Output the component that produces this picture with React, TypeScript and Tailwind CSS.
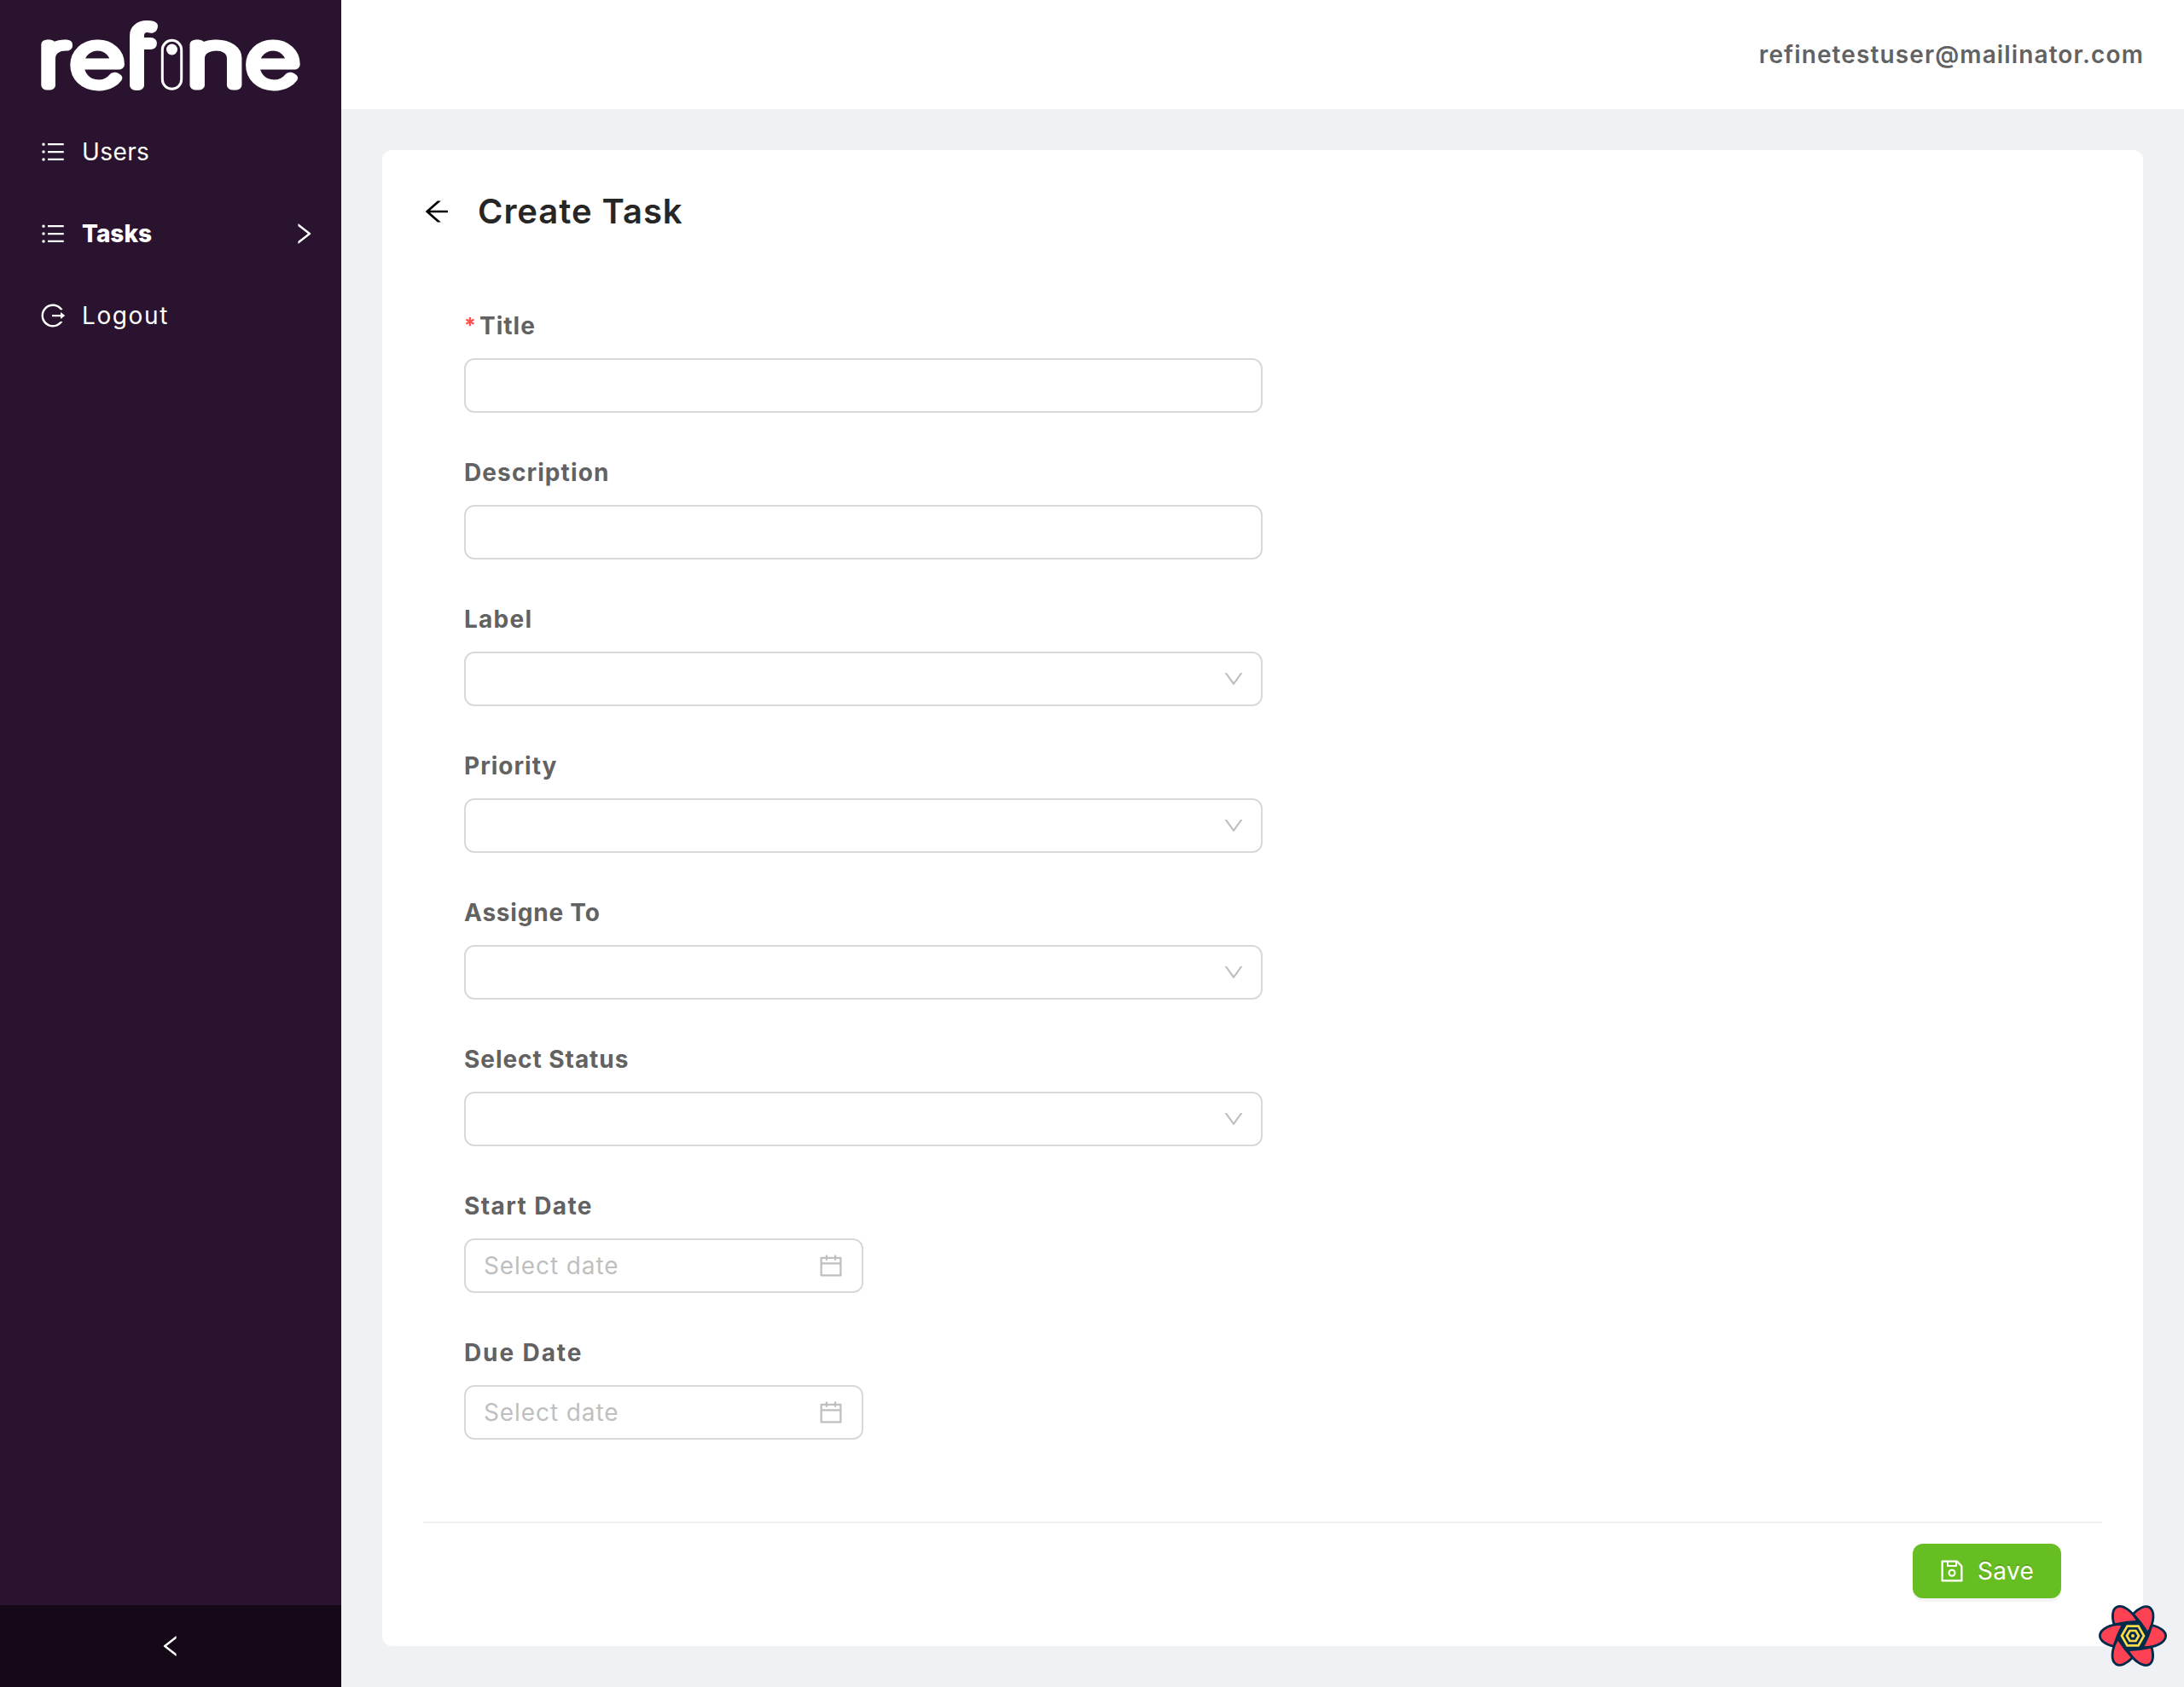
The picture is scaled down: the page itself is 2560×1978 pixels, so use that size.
import React from "react";
import type { ReactNode } from "react";
import {
  AiOutlineArrowLeft,
  AiOutlineCalendar,
  AiOutlineDown,
  AiOutlineLeft,
  AiOutlineLogout,
  AiOutlineRight,
  AiOutlineSave,
  AiOutlineUnorderedList,
} from "react-icons/ai";

type Kind = "input" | "select" | "date";

interface FieldDef {
  label: string;
  tracking: string;
  kind: Kind;
  required?: boolean;
}

const fields: FieldDef[] = [
  { label: "Title", tracking: "tracking-[1px]", kind: "input", required: true },
  { label: "Description", tracking: "tracking-[1.1px]", kind: "input" },
  { label: "Label", tracking: "tracking-[1.25px]", kind: "select" },
  { label: "Priority", tracking: "tracking-[1px]", kind: "select" },
  { label: "Assigne To", tracking: "tracking-[0.8px]", kind: "select" },
  { label: "Select Status", tracking: "tracking-[0.95px]", kind: "select" },
  { label: "Start Date", tracking: "tracking-[1.4px]", kind: "date" },
  { label: "Due Date", tracking: "tracking-[1.9px]", kind: "date" },
];

function Logo() {
  return (
    <svg
      className="block h-[140px] w-[400px] shrink-0 font-['Inter',sans-serif] text-[88px] font-thin"
      viewBox="0 0 400 140"
      fill="#fff"
      aria-label="refine"
    >
      <clipPath id="f-stem">
        <rect x="152" y="0" width="60" height="140" />
      </clipPath>
      <g stroke="#fff" strokeWidth="11" strokeLinejoin="round">
        <text transform="translate(44.5 100.3) scale(1.28 1)">r</text>
        <text transform="translate(82.3 100.3) scale(1.257 1)">e</text>
        <text transform="translate(218.5 100.3) scale(1.34 1)">n</text>
        <text transform="translate(288 100.3) scale(1.257 1)">e</text>
      </g>
      <g clipPath="url(#f-stem)">
        <text
          className="text-[92px]"
          transform="translate(147 100) scale(1.2 1)"
          stroke="#fff"
          strokeWidth="12"
          strokeLinejoin="round"
        >
          f
        </text>
      </g>
      <rect x="190.3" y="47.3" width="22.4" height="57" rx="11.2" fill="none" stroke="#fff" strokeWidth="3" />
      <circle cx="201.5" cy="58" r="6.5" />
    </svg>
  );
}

function MenuItem({ icon, children, arrow }: { icon: ReactNode; children: ReactNode; arrow?: boolean }) {
  return (
    <a className="flex h-20 items-center pr-7 pl-[46px] text-white">
      <span className="mr-[18px] flex size-8 text-[32px]">{icon}</span>
      {children}
      {arrow && <AiOutlineRight className="ml-auto size-8" />}
    </a>
  );
}

function Sidebar() {
  return (
    <aside className="flex w-[400px] shrink-0 flex-col bg-[#2a132e] text-[28px] leading-none">
      <Logo />
      <nav className="-mt-0.5 flex flex-1 flex-col gap-4">
        <MenuItem icon={<AiOutlineUnorderedList />}>
          <span className="tracking-[0.4px]">Users</span>
        </MenuItem>
        <MenuItem icon={<AiOutlineUnorderedList />} arrow>
          <span className="font-extrabold">Tasks</span>
        </MenuItem>
        <MenuItem icon={<AiOutlineLogout />}>
          <span className="tracking-[1.6px]">Logout</span>
        </MenuItem>
      </nav>
      <button className="flex h-24 items-center justify-center bg-black/50 text-white">
        <AiOutlineLeft className="size-8" />
      </button>
    </aside>
  );
}

function Control({ kind }: { kind: Kind }) {
  if (kind === "date") {
    return (
      <div className="flex h-16 w-[468px] items-center justify-between rounded-xl border-2 border-[#d9d9d9] pr-5 pl-[21px] text-[#bfbfbf]">
        <span className="tracking-[0.9px]">Select date</span>
        <AiOutlineCalendar className="size-8" />
      </div>
    );
  }
  return (
    <div className="flex h-16 w-[936px] items-center justify-end rounded-xl border-2 border-[#d9d9d9] pr-[18px] text-[#bfbfbf]">
      {kind === "select" && <AiOutlineDown className="size-7" />}
    </div>
  );
}

function Field({ label, tracking, kind, required }: FieldDef) {
  return (
    <div className="mb-[50px]">
      <label className="mb-[18px] flex h-10 items-center font-bold text-[#626262]">
        {required && <span className="w-[18px] text-[25px] leading-8 font-bold text-[#ff4d4f]">*</span>}
        <span className={tracking}>{label}</span>
      </label>
      <Control kind={kind} />
    </div>
  );
}

const petalAngles = [0, 60, 120, 180, 240, 300];

function QueryFlower() {
  return (
    <svg className="absolute top-[1878px] left-[2456px] h-20 w-[88px]" viewBox="-44 -40 88 80">
      <circle r="19" fill="#002c4b" />
      {petalAngles.map((a) => (
        <path
          key={a}
          transform={`rotate(${a})`}
          d="M-11.5 -13.6C-26 -14.2 -38.6 -8 -38.6 0C-38.6 5.4 -32 10.2 -22.3 12.5C-19.4 3 -16 -5 -11.5 -13.6Z"
          fill="#ff4154"
          stroke="#002c4b"
          strokeWidth="2.8"
          strokeLinejoin="round"
        />
      ))}
      <path d="M-16.5 0L-8.25 -14.3H8.25L16.5 0L8.25 14.3H-8.25Z" fill="#002c4b" />
      <g fill="none" stroke="#ffd94c" strokeWidth="2.7">
        <path d="M-13 0L-6.5 -11.3H6.5L13 0L6.5 11.3H-6.5Z" />
        <path d="M-7 0L-3.5 -6H3.5L7 0L3.5 6H-3.5Z" />
      </g>
      <circle r="2" fill="#ffd94c" />
    </svg>
  );
}

export default function App() {
  return (
    <div className="relative flex h-[1978px] w-[2560px] overflow-hidden bg-[#f0f1f5] font-['Inter',sans-serif] text-[28px] leading-none">
      <Sidebar />
      <div className="flex flex-1 flex-col">
        <header className="flex h-32 items-center justify-end bg-white pr-[47px] font-semibold text-[#626262]">
          <span className="tracking-[1.12px]">refinetestuser@mailinator.com</span>
        </header>
        <main className="mx-12 mt-12 flex h-[1754px] flex-col rounded-xl bg-white">
          <div className="mt-11 flex h-14 items-center pl-[46px]">
            <AiOutlineArrowLeft className="mr-[30px] size-9 text-black" />
            <h1 className="text-[40px] font-semibold tracking-[0.95px] text-[#262626]">Create Task</h1>
          </div>
          <form className="mt-[86px] flex-1 pl-24">
            {fields.map((f) => (
              <Field key={f.label} {...f} />
            ))}
          </form>
          <footer className="mx-12 flex h-[146px] items-start justify-end border-t-2 border-[#f0f0f0] pt-6 pr-12">
            <button
              type="button"
              className="flex h-16 w-[174px] items-center rounded-xl bg-[#67be23] pl-[30px] text-white shadow-[0_4px_0_rgba(0,0,0,0.045)] [text-shadow:0_-2px_0_rgba(0,0,0,0.12)]"
            >
              <AiOutlineSave className="mr-3.5 size-8" />
              <span className="tracking-[0.37px]">Save</span>
            </button>
          </footer>
        </main>
      </div>
      <QueryFlower />
    </div>
  );
}
